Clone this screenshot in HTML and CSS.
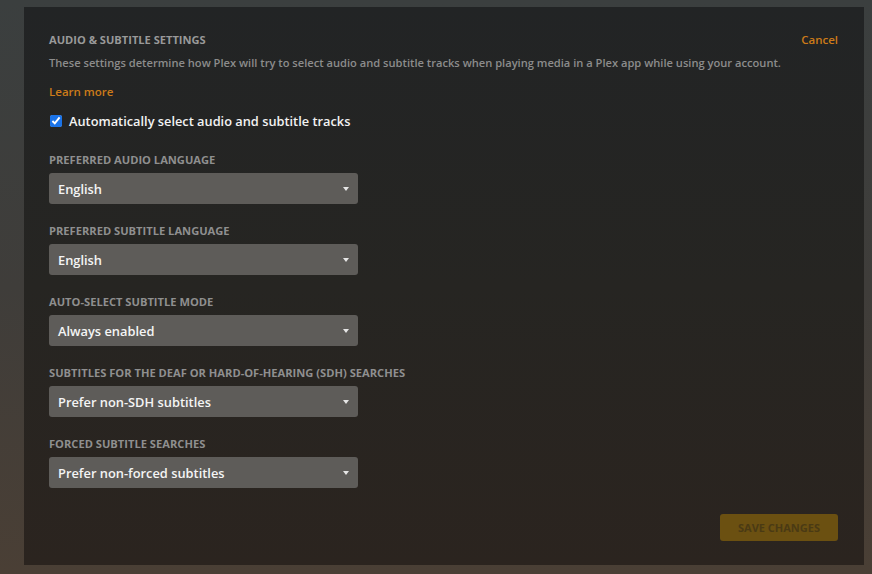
FILE: index.html
```html
<!DOCTYPE html>
<html>
<head>
<meta charset="utf-8">
<link rel="stylesheet" href="styles.css">
</head>
<body>
<div class="panel">
  <div class="head">
    <h1 class="title">AUDIO &amp; SUBTITLE SETTINGS</h1>
    <a class="cancel">Cancel</a>
  </div>
  <p class="desc">These settings determine how Plex will try to select audio and subtitle tracks when playing media in a Plex app while using your account.</p>
  <a class="learn">Learn more</a>
  <label class="check"><input type="checkbox" checked> <span>Automatically select audio and subtitle tracks</span></label>

  <div class="field">
    <div class="label">PREFERRED AUDIO LANGUAGE</div>
    <div class="select"><span>English</span><i class="caret"></i></div>
  </div>
  <div class="field">
    <div class="label">PREFERRED SUBTITLE LANGUAGE</div>
    <div class="select"><span>English</span><i class="caret"></i></div>
  </div>
  <div class="field">
    <div class="label">AUTO-SELECT SUBTITLE MODE</div>
    <div class="select"><span>Always enabled</span><i class="caret"></i></div>
  </div>
  <div class="field">
    <div class="label">SUBTITLES FOR THE DEAF OR HARD-OF-HEARING (SDH) SEARCHES</div>
    <div class="select"><span>Prefer non-SDH subtitles</span><i class="caret"></i></div>
  </div>
  <div class="field">
    <div class="label">FORCED SUBTITLE SEARCHES</div>
    <div class="select"><span>Prefer non-forced subtitles</span><i class="caret"></i></div>
  </div>
  <div class="footer">
    <button class="save">SAVE CHANGES</button>
  </div>
</div>
</body>
</html>
```

FILE: styles.css
```css
html, body {
  margin: 0;
  height: 100%;
}
body {
  background: linear-gradient(180deg, #3b3f3f 0%, #3f3d3a 50%, #4a3f35 100%);
  font-family: "Open Sans", "Liberation Sans", sans-serif;
  padding: 7px 8px 9px 24px;
  box-sizing: border-box;
  overflow: hidden;
}
.panel {
  height: 558px;
  box-sizing: border-box;
  background: linear-gradient(180deg, #222425 0%, #262522 50%, #2b241f 100%);
  padding: 24px 26px 0 25px;
  display: flex;
  flex-direction: column;
  align-items: flex-start;
}
.head {
  display: flex;
  justify-content: space-between;
  align-items: center;
  width: 100%;
}
.title {
  margin: 0;
  font-size: 11.1px;
  font-weight: 700;
  color: #999999;
  line-height: 18px;
}
.cancel {
  font-size: 11.5px;
  font-weight: 600;
  color: #cc7b19;
  line-height: 18px;
}
.desc {
  margin: 5px 0 0;
  font-size: 11.13px;
  font-weight: 600;
  color: #8c8c8c;
  line-height: 18px;
}
.learn {
  margin-top: 11px;
  font-size: 11.5px;
  font-weight: 600;
  color: #cc7b19;
  line-height: 18px;
}
.check {
  margin-top: 11px;
  display: flex;
  align-items: center;
  gap: 7px;
  font-size: 12.8px;
  font-weight: 600;
  color: #f2f2f2;
  line-height: 18px;
}
.check input {
  margin: 0 0 0 1px;
  width: 12px;
  height: 12px;
  accent-color: #1a73e8;
}
.field {
  margin-top: 18px;
  display: flex;
  flex-direction: column;
}
.check + .field {
  margin-top: 21px;
}
.label {
  padding-top: 1px;
  font-size: 11.15px;
  font-weight: 700;
  color: #8f8f8f;
  line-height: 16px;
}
.select {
  margin-top: 5px;
  width: 309px;
  height: 31px;
  box-sizing: border-box;
  border-radius: 3px;
  background: #5e5c59;
  display: flex;
  align-items: center;
  justify-content: space-between;
  padding: 0 9px 0 9px;
  font-size: 12.85px;
  font-weight: 600;
  color: #f4f4f4;
}
.caret {
  width: 0;
  height: 0;
  border-left: 3.5px solid transparent;
  border-right: 3.5px solid transparent;
  border-top: 4px solid #e6e6e6;
}
.footer {
  margin-top: auto;
  margin-bottom: 24px;
  width: 100%;
  display: flex;
  justify-content: flex-end;
}
.save {
  width: 118px;
  height: 27px;
  border: 0;
  border-radius: 3px;
  background: #6b5011;
  color: #4a3a14;
  font-family: "Open Sans", "Liberation Sans", sans-serif;
  font-size: 11px;
  font-weight: 700;
  padding: 0;
}
```
